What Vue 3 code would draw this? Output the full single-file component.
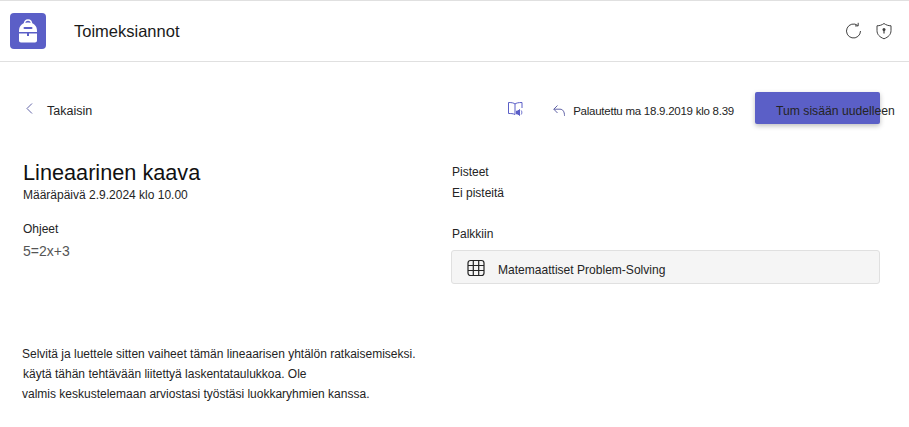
<script setup>
const instructions = [
  { text: 'Selvitä ja luettele sitten vaiheet tämän lineaarisen yhtälön ratkaisemiseksi.', indented: false },
  { text: 'käytä tähän tehtävään liitettyä laskentataulukkoa. Ole', indented: true },
  { text: 'valmis keskustelemaan arviostasi työstäsi luokkaryhmien kanssa.', indented: false },
]
</script>

<template>
  <div class="page">
    <header class="topbar">
      <div class="logo">
        <svg width="20" height="24" viewBox="0 0 20 24">
          <path d="M6.5 5 C6.5 2.2 8 1 10 1 C12 1 13.5 2.2 13.5 5" fill="none" stroke="#fff" stroke-width="1.6" />
          <path d="M1 12 C1 6.5 4.5 3.5 10 3.5 C15.5 3.5 19 6.5 19 12 L19 13 L1 13 Z" fill="#fff" />
          <path d="M1 14.5 L9 14.5 L9 17 L11 17 L11 14.5 L19 14.5 L19 21.5 C19 22.7 18.2 23.5 17 23.5 L3 23.5 C1.8 23.5 1 22.7 1 21.5 Z" fill="#fff" />
          <rect x="5.5" y="8" width="9" height="2" rx="1" fill="#5b5fc7" />
        </svg>
      </div>
      <h1 class="app-title">Toimeksiannot</h1>
      <div class="top-icons">
        <svg width="18" height="18" viewBox="0 0 18 18" fill="none" stroke="#424242" stroke-width="1">
          <path d="M15.5 9 A7 7 0 1 1 12.7 3.4" />
          <path d="M13.2 0.8 L13.2 3.9 L10 3.9" />
        </svg>
        <svg width="16" height="18" viewBox="0 0 16 18" fill="none" stroke="#424242" stroke-width="1">
          <path d="M8 1.5 C10 3 12.5 3.8 15 3.8 L15 8.5 C15 12.5 12.5 15 8 16.8 C3.5 15 1 12.5 1 8.5 L1 3.8 C3.5 3.8 6 3 8 1.5 Z" />
          <circle cx="8" cy="7.5" r="1.5" fill="#424242" stroke="none" />
          <rect x="7.4" y="8" width="1.2" height="3.5" fill="#424242" stroke="none" />
        </svg>
      </div>
    </header>

    <div class="actions">
      <button class="back">
        <svg width="7" height="11" viewBox="0 0 7 11" fill="none" stroke="#6264a7" stroke-width="1">
          <path d="M6 0.5 L1 5.5 L6 10.5" />
        </svg>
        <span>Takaisin</span>
      </button>
      <svg class="reader" width="15" height="14" viewBox="0 0 15 14" fill="none" stroke="#5b5fc7" stroke-width="1">
        <path d="M7 2 C6 1 4 0.5 0.5 0.5 L0.5 11.5 C3 11.5 5 11.5 7 12.5 L7 2 Z" />
        <path d="M7 2 C8 1 10.5 0.5 14 0.5 L14 6" />
        <path d="M8.5 9 L10 9 L11.5 7.5 L11.5 13.5 L10 12 L8.5 12 Z" fill="#5b5fc7" />
        <path d="M13.2 8.5 C14 9.5 14 11.5 13.2 12.5" />
      </svg>
      <svg class="reply" width="12" height="11" viewBox="0 0 12 11" fill="none" stroke="#6264a7" stroke-width="1">
        <path d="M4.5 0.5 L0.8 4.2 L4.5 8" />
        <path d="M0.8 4.2 L7 4.2 C9.8 4.2 11.5 6.5 11.5 10.8" />
      </svg>
      <span class="returned">Palautettu ma 18.9.2019 klo 8.39</span>
      <button class="resubmit"><span>Tum sisään uudelleen</span></button>
    </div>

    <main class="columns">
      <section class="left">
        <h2 class="title">Lineaarinen kaava</h2>
        <p class="due">Määräpäivä 2.9.2024 klo 10.00</p>
        <p class="label guide">Ohjeet</p>
        <p class="formula">5=2x+3</p>
      </section>
      <section class="right">
        <p class="label">Pisteet</p>
        <p class="points">Ei pisteitä</p>
        <p class="label reward">Palkkiin</p>
        <div class="rubric">
          <svg width="18" height="18" viewBox="0 0 18 18" fill="none" stroke="#242424" stroke-width="1.2">
            <rect x="1" y="1.5" width="16" height="15" rx="2.5" />
            <path d="M1 6.5 H17 M1 11.5 H17 M6.3 1.5 V16.5 M11.7 1.5 V16.5" />
          </svg>
          <span>Matemaattiset Problem-Solving</span>
        </div>
      </section>
    </main>

    <div class="instructions">
      <p v-for="line in instructions" :key="line.text" :class="{ indented: line.indented }">{{ line.text }}</p>
    </div>
  </div>
</template>

<style>
body {
  background: #fff;
}
</style>

<style scoped>
.page {
  width: 909px;
  height: 427px;
  overflow: hidden;
  font-family: "Liberation Sans", Arial, sans-serif;
  color: #242424;
  font-size: 12px;
}

p, h1, h2 {
  margin: 0;
  font-weight: 400;
}

.topbar {
  display: flex;
  align-items: center;
  height: 60px;
  border-top: 1px solid #e0e0e0;
  border-bottom: 1px solid #e0e0e0;
  padding: 0 17px 0 10px;
}

.logo {
  width: 36px;
  height: 36px;
  border-radius: 4px;
  background: #5b5fc7;
  display: flex;
  align-items: center;
  justify-content: center;
}

.app-title {
  margin-left: 28px;
  font-size: 16.5px;
  color: #1a1a1a;
}

.top-icons {
  margin-left: auto;
  display: flex;
  align-items: center;
  gap: 13px;
}

.actions {
  display: flex;
  align-items: center;
  height: 32px;
  margin-top: 30px;
  padding: 0 29px 0 26px;
}

.back {
  display: flex;
  align-items: center;
  gap: 14px;
  border: none;
  background: none;
  padding: 0;
  font: inherit;
  font-size: 12.5px;
  color: inherit;
}

.back span {
  padding-top: 6px;
}

.reader {
  margin: 1px 0 0 auto;
}

.reply {
  margin: 4px 0 0 30px;
}

.returned {
  margin-left: 8px;
  padding-top: 6px;
  font-size: 11.5px;
  letter-spacing: -0.25px;
  white-space: nowrap;
}

.resubmit {
  margin-left: 21px;
  width: 125px;
  height: 32px;
  border: none;
  border-radius: 2px;
  background: #5b5fc7;
  box-shadow: 0 2px 5px rgba(0, 0, 0, 0.25);
  padding: 6px 0 0 21px;
  font: inherit;
  font-size: 12.2px;
  color: #242424;
  text-align: left;
  white-space: nowrap;
}

.columns {
  display: flex;
  margin-top: 36px;
}

.left {
  width: 451px;
  padding-left: 23px;
  box-sizing: border-box;
}

.title {
  font-size: 21.7px;
  line-height: 26px;
  color: #111;
}

.due {
  margin-top: 2px;
  line-height: 14px;
}

.label {
  line-height: 14px;
}

.guide {
  margin-top: 20px;
}

.formula {
  margin-top: 7px;
  font-size: 14px;
  line-height: 16px;
  color: #555;
}

.right {
  width: 429px;
  padding-top: 5px;
}

.right .label,
.points {
  padding-left: 1px;
}

.points {
  margin-top: 7px;
  line-height: 14px;
}

.reward {
  margin-top: 27px;
}

.rubric {
  display: flex;
  align-items: center;
  gap: 13px;
  height: 32px;
  margin-top: 9px;
  padding-left: 15px;
  background: #f5f5f5;
  border: 1px solid #e0e0e0;
  border-radius: 3px;
}

.rubric svg {
  margin-top: 2px;
}

.rubric span {
  padding-top: 5px;
  font-size: 12.05px;
}

.instructions {
  margin-top: 60px;
  padding-left: 22px;
}

.instructions p {
  line-height: 20px;
}

.instructions .indented {
  padding-left: 1px;
}
</style>
